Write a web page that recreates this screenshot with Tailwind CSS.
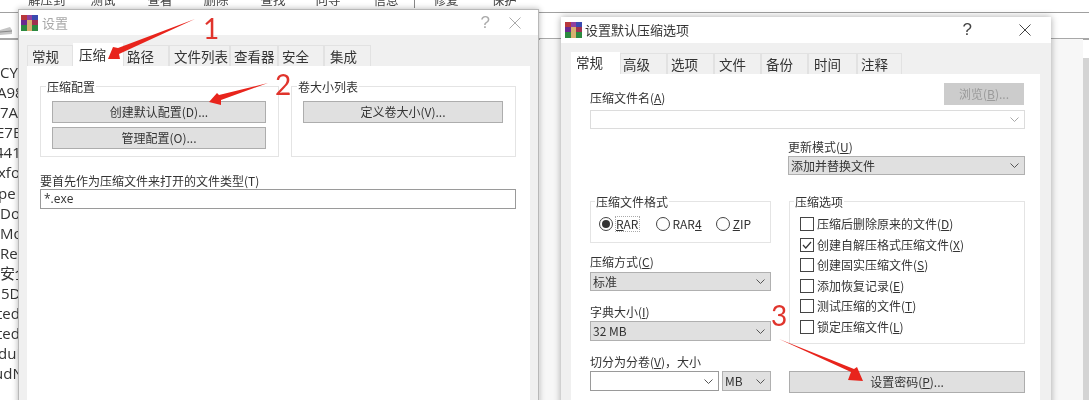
<!DOCTYPE html>
<html lang="zh">
<head>
<meta charset="utf-8">
<script src="https://cdn.jsdelivr.net/npm/@tailwindcss/browser@4"></script>
</head>
<body class="m-0 bg-white">
<div class="relative w-[1089px] h-[400px] overflow-hidden bg-white text-[12px] leading-[14px] text-[#333] blur-[0.4px] font-['Noto_Sans_CJK_SC','Noto_Sans',sans-serif]">

  <!-- Main window behind -->
  <div class="flex h-[13px] border-b border-[#a0a0a0] overflow-hidden text-[12.5px] leading-[14px] text-[#444] whitespace-nowrap">
    <span class="ml-[28px] -mt-[7px]">解压到</span>
    <span class="ml-[25px] -mt-[7px]">测试</span>
    <span class="ml-[32px] -mt-[7px]">查看</span>
    <span class="ml-[31px] -mt-[7px]">删除</span>
    <span class="ml-[32px] -mt-[7px]">查找</span>
    <span class="ml-[30px] -mt-[7px]">向导</span>
    <span class="ml-[33px] -mt-[7px]">信息</span>
    <span class="ml-[15px] w-px h-[8px] bg-[#888]"></span>
    <span class="ml-[19px] -mt-[7px]">修复</span>
    <span class="ml-[33px] -mt-[7px]">保护</span>
  </div>
  <div class="h-[25px] flex items-center">
    <svg class="ml-0 mt-[12px]" width="13" height="9" viewBox="0 0 13 9"><path d="M0 3 L10 0 L12 3 L12 7 L0 8 Z" fill="#c4c4c4"/><path d="M0 5 L12 4" stroke="#888"/></svg>
  </div>
  <div class="border-t-2 border-[#a8a8a8] h-[2px]"></div>
  <div class="w-[18px] h-[362px] pt-[22px] overflow-hidden text-[15px] leading-[20.1px] text-[#333] whitespace-nowrap font-['Open_Sans','Noto_Sans_CJK_SC',sans-serif]">
    <div>CYC</div>
    <div class="-ml-[3px]">A98</div>
    <div>7AC</div>
    <div class="-ml-[4px]">E7B</div>
    <div class="-ml-[5px]">441</div>
    <div class="-ml-[2px]">xfor</div>
    <div class="-ml-[2px]">pe</div>
    <div>Do</div>
    <div>Mo</div>
    <div>Re</div>
    <div>安全</div>
    <div class="ml-px">5D</div>
    <div class="-ml-[3px]">ted</div>
    <div class="-ml-[3px]">ted</div>
    <div class="-ml-[2px]">duN</div>
    <div class="-ml-[6px]">udN</div>
  </div>
  <div class="absolute left-[1083px] top-[40px] w-[6px] h-[360px] bg-white">
    <div class="mt-[18px] h-[342px] bg-[#d4d4d4]"></div>
  </div>
  <div class="absolute left-[1051px] top-[39px] w-[32px] h-[361px] bg-[#f7f7f7]"></div>
  <div class="absolute left-[540px] top-[39px] w-[21px] h-[361px] bg-[#f7f7f7]"></div>
  <div class="absolute left-[1051px] top-[14px] w-[38px] h-[23px] bg-white"></div>

  <!-- Settings dialog -->
  <div class="absolute left-[18px] top-[9px] w-[521px] h-[400px] bg-[#f0f0f0] border-l border-t border-r border-[#b8b8b8] shadow-[0_0_6px_rgba(0,0,0,0.3)]">
    <div class="h-[25px] bg-white flex items-center">
      <svg class="ml-[2px] mt-[1px]" width="17" height="16" viewBox="0 0 17 16"><rect width="6" height="5" fill="#b8383c"/><rect x="6" width="5" height="5" fill="#9040a0"/><rect x="11" width="6" height="5" fill="#3a4ab0"/><rect y="5" width="6" height="5" fill="#6a2a90"/><rect x="6" y="5" width="5" height="5" fill="#d8b070"/><rect x="11" y="5" width="6" height="5" fill="#a03050"/><rect y="10" width="6" height="6" fill="#2c8a40"/><rect x="6" y="10" width="5" height="6" fill="#d8b070"/><rect x="11" y="10" width="6" height="6" fill="#2c8a40"/></svg>
      <span class="ml-[4px] text-[13px] text-[#a8a8a8]">设置</span>
      <span class="ml-auto mr-[19px] text-[17px] text-[#aaa] font-['Liberation_Sans',sans-serif]">?</span>
      <svg class="mr-[17px]" width="12" height="12" viewBox="0 0 12 12"><path d="M0.5 0.5 L11.5 11.5 M11.5 0.5 L0.5 11.5" stroke="#aaa" fill="none"/></svg>
    </div>
    <div class="flex items-end h-[31px] pl-[8px] text-[13.5px]">
      <div class="w-[46px] h-[21px] pl-[4px] pb-px bg-[#f0f0f0] border border-b-0 border-[#e2e2e2] flex items-center">常规</div>
      <div class="w-[50px] h-[23px] pl-[6px] pb-[2px] bg-white flex items-center">压缩</div>
      <div class="w-[46px] h-[21px] pl-[3px] pb-px bg-[#f0f0f0] border border-b-0 border-[#e2e2e2] flex items-center">路径</div>
      <div class="w-[61px] h-[21px] pl-[4px] pb-px bg-[#f0f0f0] border border-b-0 border-[#e2e2e2] flex items-center">文件列表</div>
      <div class="w-[48px] h-[21px] pl-[3px] pb-px bg-[#f0f0f0] border border-b-0 border-[#e2e2e2] flex items-center">查看器</div>
      <div class="w-[46px] h-[21px] pl-[3px] pb-px bg-[#f0f0f0] border border-b-0 border-[#e2e2e2] flex items-center">安全</div>
      <div class="w-[47px] h-[21px] pl-[5px] pb-px bg-[#f0f0f0] border border-b-0 border-[#e2e2e2] flex items-center">集成</div>
    </div>
    <div class="mx-[8px] h-[340px] bg-white px-[13px] pt-[20px]">
      <div class="flex gap-[12px]">
        <div class="relative w-[239px] h-[71px] border border-[#e4e4e4] pt-[14px] pl-[11px]">
          <span class="absolute left-[5px] -top-[7px] bg-white px-px">压缩配置</span>
          <div class="w-[214px] h-[22px] bg-[#e0e0e0] border border-[#adadad] flex items-center justify-center">创建默认配置(D)...</div>
          <div class="w-[214px] h-[22px] mt-[4px] bg-[#e0e0e0] border border-[#adadad] flex items-center justify-center">管理配置(O)...</div>
        </div>
        <div class="relative w-[225px] h-[71px] border border-[#e4e4e4] pt-[14px] pl-[11px]">
          <span class="absolute left-[5px] -top-[7px] bg-white px-px">卷大小列表</span>
          <div class="w-[200px] h-[22px] bg-[#e0e0e0] border border-[#adadad] flex items-center justify-center">定义卷大小(V)...</div>
        </div>
      </div>
      <div class="mt-[17px]">要首先作为压缩文件来打开的文件类型(T)</div>
      <div class="mt-px w-[476px] h-[20px] border border-[#9a9a9a] pl-[3px] flex items-center font-['Open_Sans',sans-serif]">*.exe</div>
    </div>
  </div>

  <!-- Default compression options dialog -->
  <div class="absolute left-[561px] top-[17px] w-[490px] h-[400px] bg-[#f0f0f0] shadow-[0_0_7px_rgba(0,0,0,0.35)]">
    <div class="h-[26px] bg-white flex items-center">
      <svg class="ml-[4px]" width="17" height="16" viewBox="0 0 17 16"><rect width="6" height="5" fill="#b8383c"/><rect x="6" width="5" height="5" fill="#9040a0"/><rect x="11" width="6" height="5" fill="#3a4ab0"/><rect y="5" width="6" height="5" fill="#6a2a90"/><rect x="6" y="5" width="5" height="5" fill="#d8b070"/><rect x="11" y="5" width="6" height="5" fill="#a03050"/><rect y="10" width="6" height="6" fill="#2c8a40"/><rect x="6" y="10" width="5" height="6" fill="#d8b070"/><rect x="11" y="10" width="6" height="6" fill="#2c8a40"/></svg>
      <span class="ml-[3px] text-[13px]">设置默认压缩选项</span>
      <span class="ml-auto mr-[47px] text-[17px] text-[#444] font-['Liberation_Sans',sans-serif]">?</span>
      <svg class="mr-[20px]" width="12" height="12" viewBox="0 0 12 12"><path d="M0.5 0.5 L11.5 11.5 M11.5 0.5 L0.5 11.5" stroke="#444" fill="none"/></svg>
    </div>
    <div class="flex items-end h-[31px] pl-[10px] text-[13.5px]">
      <div class="w-[49px] h-[22px] pl-[5px] pb-[2px] bg-white flex items-center">常规</div>
      <div class="w-[47px] h-[21px] pl-[2px] bg-[#f0f0f0] border border-b-0 border-[#e2e2e2] flex items-center">高级</div>
      <div class="w-[47px] h-[21px] pl-[3px] bg-[#f0f0f0] border border-b-0 border-[#e2e2e2] flex items-center">选项</div>
      <div class="w-[47px] h-[21px] pl-[4px] bg-[#f0f0f0] border border-b-0 border-[#e2e2e2] flex items-center">文件</div>
      <div class="w-[47px] h-[21px] pl-[4px] bg-[#f0f0f0] border border-b-0 border-[#e2e2e2] flex items-center">备份</div>
      <div class="w-[49px] h-[21px] pl-[5px] bg-[#f0f0f0] border border-b-0 border-[#e2e2e2] flex items-center">时间</div>
      <div class="w-[45px] h-[21px] pl-[3px] bg-[#f0f0f0] border border-b-0 border-[#e2e2e2] flex items-center">注释</div>
    </div>
    <div class="mx-[10px] w-[469px] h-[343px] bg-white pl-[19px] pr-[15px] pt-[9px]">
      <div class="flex justify-between items-end pr-px">
        <span>压缩文件名(<span class="underline">A</span>)</span>
        <div class="w-[80px] h-[22px] bg-[#cccccc] text-[#9a9a9a] flex items-center justify-center">浏览(<span class="underline">B</span>)...</div>
      </div>
      <div class="mt-[5px] h-[19px] border border-[#dcdcdc] flex items-center justify-end pr-[5px]">
        <svg width="9" height="5" viewBox="0 0 9 5"><path d="M0.5 0.5 L4.5 4.5 L8.5 0.5" fill="none" stroke="#a8a8a8"/></svg>
      </div>
      <div class="ml-[198px] mt-[11px]">更新模式(<span class="underline">U</span>)</div>
      <div class="ml-[198px] mt-[2px] h-[19px] bg-[#e0e0e0] border border-[#b0b0b0] flex items-center justify-between pl-[2px] pr-[5px]">
        <span>添加并替换文件</span>
        <svg width="9" height="5" viewBox="0 0 9 5"><path d="M0.5 0.5 L4.5 4.5 L8.5 0.5" fill="none" stroke="#555"/></svg>
      </div>

      <div class="flex gap-[18px] mt-[26px]">
        <div class="w-[181px] shrink-0">
          <div class="relative h-[42px] border border-[#e4e4e4] flex items-center pl-[8px] pt-[3px]">
            <span class="absolute left-[4px] -top-[7px] bg-white px-px">压缩文件格式</span>
            <span class="w-[14px] h-[14px] rounded-full border border-[#444] flex items-center justify-center"><span class="w-[8px] h-[8px] rounded-full bg-[#333]"></span></span>
            <span class="ml-[3px] outline outline-1 outline-dotted outline-[#aaa]"><span class="underline">R</span>AR</span>
            <span class="ml-[17px] w-[14px] h-[14px] rounded-full border border-[#444]"></span>
            <span class="ml-[3px]">RAR<span class="underline">4</span></span>
            <span class="ml-[14px] w-[14px] h-[14px] rounded-full border border-[#444]"></span>
            <span class="ml-[3px]"><span class="underline">Z</span>IP</span>
          </div>
          <div class="mt-[12px]">压缩方式(<span class="underline">C</span>)</div>
          <div class="mt-[3px] h-[19px] bg-[#e0e0e0] border border-[#b0b0b0] flex items-center justify-between pl-[2px] pr-[5px]">
            <span>标准</span>
            <svg width="9" height="5" viewBox="0 0 9 5"><path d="M0.5 0.5 L4.5 4.5 L8.5 0.5" fill="none" stroke="#555"/></svg>
          </div>
          <div class="mt-[14px]">字典大小(<span class="underline">I</span>)</div>
          <div class="mt-[2px] h-[20px] bg-[#e0e0e0] border border-[#b0b0b0] flex items-center justify-between pl-[2px] pr-[5px]">
            <span>32 MB</span>
            <svg width="9" height="5" viewBox="0 0 9 5"><path d="M0.5 0.5 L4.5 4.5 L8.5 0.5" fill="none" stroke="#555"/></svg>
          </div>
          <div class="mt-[14px]">切分为分卷(<span class="underline">V</span>)，大小</div>
          <div class="mt-[2px] flex gap-[3px]">
            <div class="w-[129px] h-[20px] border border-[#9a9a9a] flex items-center justify-end pr-[5px]">
              <svg width="9" height="5" viewBox="0 0 9 5"><path d="M0.5 0.5 L4.5 4.5 L8.5 0.5" fill="none" stroke="#555"/></svg>
            </div>
            <div class="w-[49px] h-[20px] bg-[#e0e0e0] border border-[#b0b0b0] flex items-center justify-between pl-[2px] pr-[5px]">
              <span>MB</span>
              <svg width="9" height="5" viewBox="0 0 9 5"><path d="M0.5 0.5 L4.5 4.5 L8.5 0.5" fill="none" stroke="#555"/></svg>
            </div>
          </div>
        </div>
        <div class="flex-1">
          <div class="relative h-[143px] border border-[#e4e4e4] pl-[10px] pt-[12px]">
            <span class="absolute left-[4px] -top-[7px] bg-white px-px">压缩选项</span>
            <div class="flex items-center h-[20.5px]"><span class="w-[14px] h-[14px] border border-[#444]"></span><span class="ml-[3px]">压缩后删除原来的文件(<span class="underline">D</span>)</span></div>
            <div class="flex items-center h-[20.5px]"><span class="w-[14px] h-[14px] border border-[#444] flex items-center justify-center"><svg width="10" height="8" viewBox="0 0 10 8"><path d="M1 4 L3.8 7 L9 1" fill="none" stroke="#333" stroke-width="1.2"/></svg></span><span class="ml-[3px]">创建自解压格式压缩文件(<span class="underline">X</span>)</span></div>
            <div class="flex items-center h-[20.5px]"><span class="w-[14px] h-[14px] border border-[#444]"></span><span class="ml-[3px]">创建固实压缩文件(<span class="underline">S</span>)</span></div>
            <div class="flex items-center h-[20.5px]"><span class="w-[14px] h-[14px] border border-[#444]"></span><span class="ml-[3px]">添加恢复记录(<span class="underline">E</span>)</span></div>
            <div class="flex items-center h-[20.5px]"><span class="w-[14px] h-[14px] border border-[#444]"></span><span class="ml-[3px]">测试压缩的文件(<span class="underline">T</span>)</span></div>
            <div class="flex items-center h-[20.5px]"><span class="w-[14px] h-[14px] border border-[#444]"></span><span class="ml-[3px]">锁定压缩文件(<span class="underline">L</span>)</span></div>
          </div>
          <div class="mt-[27px] h-[22px] bg-[#e0e0e0] border border-[#adadad] flex items-center justify-center">设置密码(<span class="underline">P</span>)...</div>
        </div>
      </div>
    </div>
  </div>

  <!-- Red annotations -->
  <svg class="absolute left-0 top-0 pointer-events-none" width="1089" height="400" viewBox="0 0 1089 400">
    <polygon points="195,19 118,48 113,47 108,59 120,59 119,54" fill="#e8241c"/>
    <polygon points="268,83 219,95 217,93 209,102 221,105 221,100" fill="#e8241c"/>
    <polygon points="779,339 851,372 848,380 863,381 857,367 854,369" fill="#e8241c"/>
  </svg>
  <span class="absolute left-[203px] top-[11px] text-[28px] leading-[34px] text-[#e0342c] font-['Lato',sans-serif]">1</span>
  <span class="absolute left-[275px] top-[67px] text-[28px] leading-[34px] text-[#e0342c] font-['Lato',sans-serif]">2</span>
  <span class="absolute left-[771px] top-[298px] text-[28px] leading-[34px] text-[#e0342c] font-['Lato',sans-serif]">3</span>
</div>
</body>
</html>
